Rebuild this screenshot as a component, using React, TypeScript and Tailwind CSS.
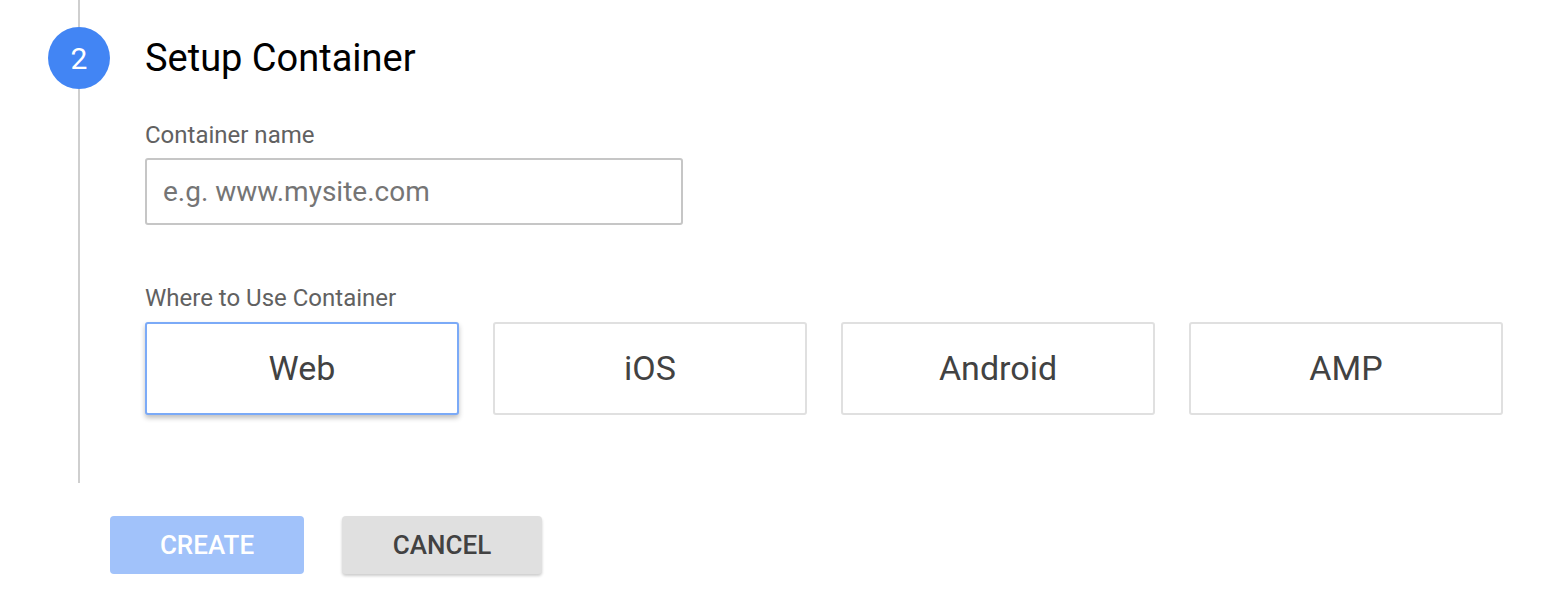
import { useState } from "react";

const targets = ["Web", "iOS", "Android", "AMP"];

const App = () => {
  const [target, setTarget] = useState("Web");

  return (
    <div className="h-[610px] w-[1542px] bg-white font-['Roboto',sans-serif]">
      <div className="flex">
        <div className="flex w-[145px] shrink-0 pl-[48px]">
          <div className="flex w-[62px] flex-col items-center">
            <div className="h-[27px] w-[2px] bg-[#cfcfcf]" />
            <div className="flex h-[62px] w-[62px] items-center justify-center rounded-full bg-[#4285f4] text-[30px] text-white">
              2
            </div>
            <div className="w-[2px] flex-1 bg-[#cfcfcf]" />
          </div>
        </div>
        <div className="flex flex-col pt-[27px] pb-[68px]">
          <h2 className="text-[38px] leading-[62px] text-black">Setup Container</h2>
          <label className="mt-[32px] text-[24px] leading-[28px] text-[#616161]">Container name</label>
          <input
            type="text"
            placeholder="e.g. www.mysite.com"
            className="mt-[9px] h-[67px] w-[538px] rounded-[3px] border-2 border-[#c6c6c6] px-[16px] text-[28px] text-[#212121] placeholder:text-[#757575] focus:outline-none"
          />
          <label className="mt-[59px] text-[24px] leading-[28px] text-[#616161]">Where to Use Container</label>
          <div className="mt-[10px] flex gap-[34px]">
            {targets.map((t) => (
              <button
                key={t}
                onClick={() => setTarget(t)}
                className={
                  t === target
                    ? "flex h-[93px] w-[314px] items-center justify-center rounded-[3px] border-2 border-[#7baaf7] bg-white text-[34px] text-[#424242] shadow-[0_3px_5px_rgba(0,0,0,0.25)]"
                    : "flex h-[93px] w-[314px] items-center justify-center rounded-[3px] border-2 border-[#e0e0e0] bg-white text-[34px] text-[#424242]"
                }
              >
                {t}
              </button>
            ))}
          </div>
        </div>
      </div>
      <div className="mt-[33px] flex gap-[38px] pl-[110px]">
        <button className="h-[58px] w-[194px] rounded-[4px] bg-[#a1c2fa] text-[26px] font-medium text-white">
          CREATE
        </button>
        <button className="h-[58px] w-[200px] rounded-[4px] bg-[#e0e0e0] text-[26px] font-medium text-[#424242] shadow-[0_2px_3px_rgba(0,0,0,0.2)]">
          CANCEL
        </button>
      </div>
    </div>
  );
};

export default App;
